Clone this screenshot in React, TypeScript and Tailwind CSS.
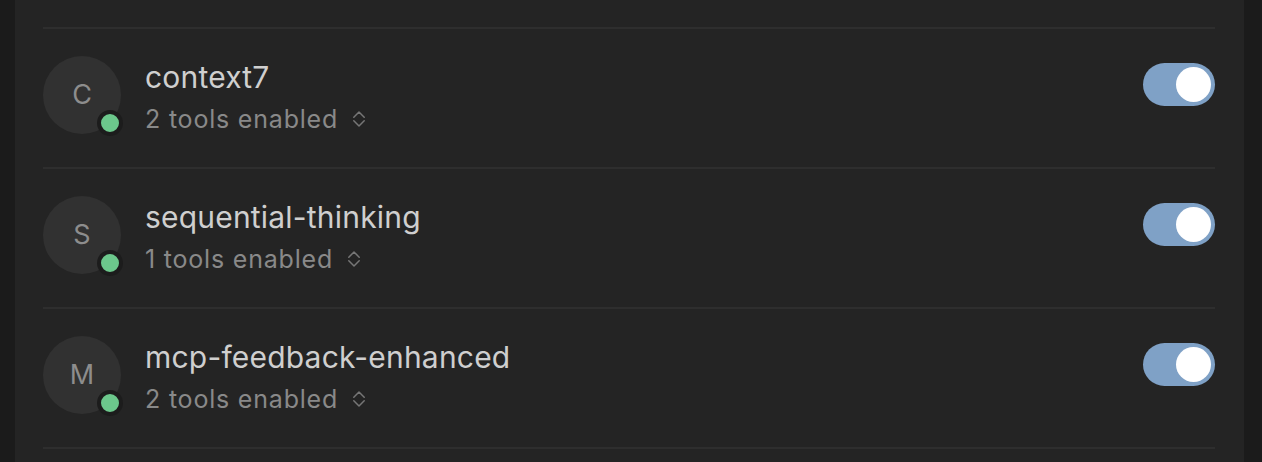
interface Server {
  name: string;
  tools: number;
  enabled: boolean;
}

const servers: Server[] = [
  { name: "context7", tools: 2, enabled: true },
  { name: "sequential-thinking", tools: 1, enabled: true },
  { name: "mcp-feedback-enhanced", tools: 2, enabled: true },
];

function UpDown() {
  return (
    <svg width="12" height="16" viewBox="0 0 12 16" fill="none" stroke="#767676" strokeWidth="1.5" strokeLinecap="round" strokeLinejoin="round" className="ml-[15px]">
      <polyline points="0.8,6.2 6,1 11.2,6.2" />
      <polyline points="0.8,9.8 6,15 11.2,9.8" />
    </svg>
  );
}

function Toggle({ on }: { on: boolean }) {
  return (
    <div
      className={`flex h-[43px] w-[72px] items-center rounded-full px-[4px] ${
        on ? "justify-end bg-[#7fa1c6]" : "justify-start bg-[#3a3a3a]"
      }`}
    >
      <div className="h-[35px] w-[35px] rounded-full bg-white" />
    </div>
  );
}

function ServerRow({ s }: { s: Server }) {
  return (
    <div className="flex h-[140px] items-start border-b-2 border-[#2e2e2e]">
      <div className="relative mt-[27px] flex h-[78px] w-[78px] shrink-0 items-center justify-center rounded-full bg-[#313131] pt-[1px] text-[27px] text-[#8d8d8d]">
        {s.name[0].toUpperCase()}
        <span className="absolute left-[54px] top-[54px] h-[26px] w-[26px] rounded-full border-[4px] border-[#1c1c1c] bg-[#6cc88c]" />
      </div>
      <div className="ml-[24px] mt-[30px] flex flex-1 flex-col">
        <span className="text-[30px] leading-[36px] tracking-[0.2px] text-[#cfcfcf]">{s.name}</span>
        <span className="mt-[8px] flex items-center text-[25px] leading-[32px] tracking-[0.8px] text-[#898989]">
          {s.tools} tools enabled
          <UpDown />
        </span>
      </div>
      <div className="mt-[34px]">
        <Toggle on={s.enabled} />
      </div>
    </div>
  );
}

export default function App() {
  return (
    <div
      className="flex h-[462px] w-full bg-[#1b1b1b]"
      style={{ fontFamily: "Inter, 'Noto Sans', sans-serif" }}
    >
      <div className="ml-[15px] mr-[18px] flex-1 overflow-hidden bg-[#242424] px-[28px] pr-[29px]">
        <div className="h-[29px] border-b-2 border-[#2e2e2e]" />
        {servers.map((s) => (
          <ServerRow key={s.name} s={s} />
        ))}
      </div>
    </div>
  );
}
